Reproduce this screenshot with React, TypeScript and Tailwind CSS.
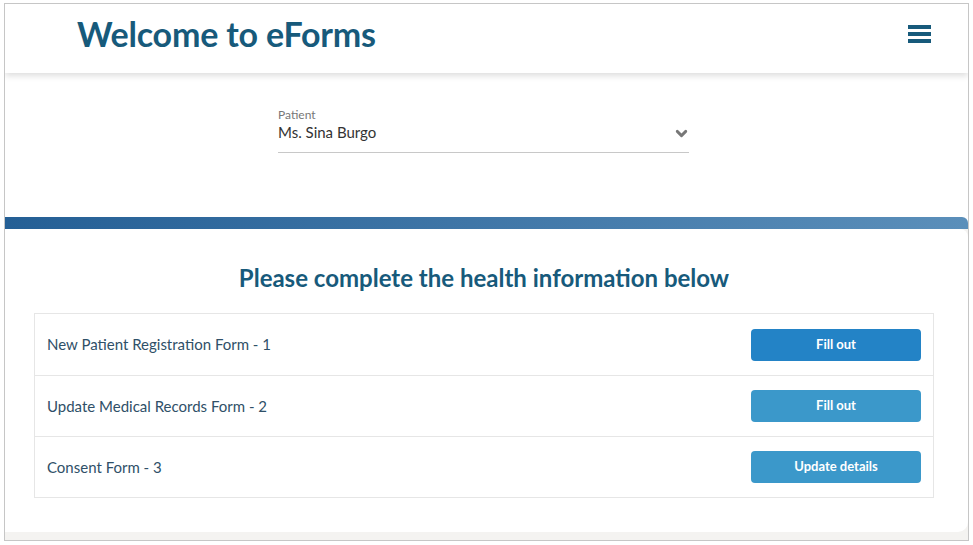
import { ChevronDown } from "lucide-react"

const forms = [
  { name: "New Patient Registration Form - 1", action: "Fill out", primary: true },
  { name: "Update Medical Records Form - 2", action: "Fill out", primary: false },
  { name: "Consent Form - 3", action: "Update details", primary: false },
]

const App = () => {
  return (
    <div className="w-[973px] h-[545px] bg-white pt-[3px] pl-[4px] font-['Lato','Noto_Sans',sans-serif]">
      <div className="w-[965px] h-[538px] border border-[#c6c6c6] flex flex-col overflow-hidden">
        {/* header */}
        <header className="h-[69px] shrink-0 bg-white flex items-center justify-between pl-[72px] pr-[37px] pb-[10px] shadow-[0_3px_6px_rgba(0,0,0,0.13)] relative z-10">
          <h1 className="text-[34px] font-bold text-[#175a7b] tracking-[-0.2px] leading-none">Welcome to eForms</h1>
          <button className="flex flex-col gap-[3px]">
            <span className="block w-[23px] h-[4px] bg-[#175a7b]" />
            <span className="block w-[23px] h-[4px] bg-[#175a7b]" />
            <span className="block w-[23px] h-[4px] bg-[#175a7b]" />
          </button>
        </header>

        {/* patient select */}
        <div className="h-[144px] shrink-0 bg-white flex justify-center pt-[33px]">
          <div className="w-[411px] ml-[-6px] h-[47px] border-b border-[#c8c8c8] flex items-end justify-between pb-[10px]">
            <div className="flex flex-col">
              <span className="text-[12px] text-[#777] leading-[14px]">Patient</span>
              <span className="text-[15px] text-[#333] leading-[20px]">Ms. Sina Burgo</span>
            </div>
            <ChevronDown size={17} strokeWidth={4} className="text-[#777] mr-[-1px]" />
          </div>
        </div>

        {/* gradient band */}
        <div className="h-[12px] shrink-0 bg-gradient-to-r from-[#245f95] to-[#5b8fba] rounded-tr-[6px]" />

        {/* card */}
        <div className="flex-1 bg-[#f4f3f1]">
          <div className="h-[303px] bg-white rounded-tr-[8px] rounded-br-[10px] pl-[29px] pr-[34px] pt-[34px]">
            <h2 className="text-center text-[24px] font-bold text-[#175a7b] leading-[30px]">
              Please complete the health information below
            </h2>
            <div className="mt-[20px] border border-[#e6e6e6]">
              {forms.map((f, i) => (
                <div
                  key={f.name}
                  className={`h-[61px] flex items-center justify-between pl-[12px] pr-[12px] ${i > 0 ? "border-t border-[#e6e6e6]" : ""}`}
                >
                  <span className="text-[15px] text-[#2f5068]">{f.name}</span>
                  <button
                    className={`w-[170px] h-[32px] rounded-[4px] text-white text-[13px] font-bold ${f.primary ? "bg-[#2383c6]" : "bg-[#3b98ca]"}`}
                  >
                    {f.action}
                  </button>
                </div>
              ))}
            </div>
          </div>
        </div>
      </div>
    </div>
  )
}

export default App
